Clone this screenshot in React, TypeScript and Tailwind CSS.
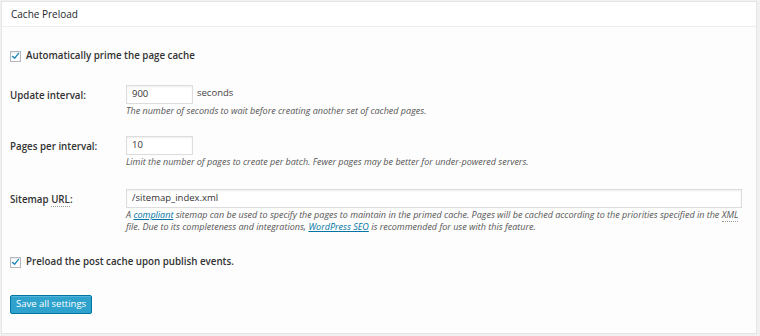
import React from 'react';

function Check() {
  return (
    <span className="w-[11px] h-[11px] border border-[#b4b9be] bg-white shadow-[inset_0_1px_2px_rgba(0,0,0,0.1)] flex items-center justify-center shrink-0">
      <svg viewBox="0 0 12 12" className="w-[10px] h-[10px]">
        <path d="M2 6.5 L4.8 9 L10 2.5" fill="none" stroke="#1e8cbe" strokeWidth="1.8" strokeLinecap="round" strokeLinejoin="round" />
      </svg>
    </span>
  );
}

export default function App() {
  return (
    <div className="w-[760px] h-[336px] bg-[#f1f1f1] pt-[1px] pl-[1px] pr-[3px] pb-[2px] font-['Open_Sans',sans-serif] text-[#444]">
      <div className="h-full bg-[#fdfdfd] border border-[#e5e5e5] flex flex-col">
        {/* Header */}
        <div className="h-[25px] bg-white border-b border-[#eeeeee] flex items-center px-[9px]">
          <span className="text-[10px] text-[#23282d]">Cache Preload</span>
        </div>

        <div className="px-[8px] pt-[22px] flex flex-col">
          <label className="flex items-center gap-[5px] h-[14px]">
            <Check />
            <span className="text-[9.75px] font-semibold text-[#333]">Automatically prime the page cache</span>
          </label>

          {/* Update interval */}
          <div className="flex mt-[22px]">
            <div className="w-[116px] pt-[4px] text-[9.75px] font-semibold text-[#333]">Update interval:</div>
            <div className="flex flex-col">
              <div className="flex items-start gap-[4px]">
                <div className="w-[67px] h-[19px] bg-white border border-[#ddd] shadow-[inset_0_1px_2px_rgba(0,0,0,0.07)] px-[5px] flex items-center text-[9.5px] text-[#333]">900</div>
                <span className="text-[9.5px] text-[#444] leading-[16px]">seconds</span>
              </div>
              <div className="mt-[1px] text-[9px] italic text-[#555] leading-[12px]">The number of seconds to wait before creating another set of cached pages.</div>
            </div>
          </div>

          {/* Pages per interval */}
          <div className="flex mt-[19px]">
            <div className="w-[116px] pt-[4px] text-[9.75px] font-semibold text-[#333]">Pages per interval:</div>
            <div className="flex flex-col">
              <div className="w-[67px] h-[19px] bg-white border border-[#ddd] shadow-[inset_0_1px_2px_rgba(0,0,0,0.07)] px-[5px] flex items-center text-[9.5px] text-[#333]">10</div>
              <div className="mt-[1px] text-[9px] italic text-[#555] leading-[12px]">Limit the number of pages to create per batch. Fewer pages may be better for under-powered servers.</div>
            </div>
          </div>

          {/* Sitemap URL */}
          <div className="flex mt-[21px]">
            <div className="w-[116px] pt-[4px] text-[9.75px] font-semibold text-[#333]">
              Sitemap <abbr className="no-underline border-b border-dotted border-[#999]">URL</abbr>:
            </div>
            <div className="flex flex-col flex-1 pr-[6px]">
              <div className="h-[19px] bg-white border border-[#ddd] shadow-[inset_0_1px_2px_rgba(0,0,0,0.07)] px-[5px] flex items-center text-[9.5px] text-[#333]">/sitemap_index.xml</div>
              <div className="mt-[1px] text-[9px] italic text-[#555] leading-[12px]">
                A <a className="text-[#0074a2] underline">compliant</a> sitemap can be used to specify the pages to maintain in the primed cache. Pages will be cached according to the priorities specified in the <abbr className="no-underline border-b border-dotted border-[#999]">XML</abbr> file. Due to its completeness and integrations, <a className="text-[#0074a2] underline">WordPress SEO</a> is recommended for use with this feature.
              </div>
            </div>
          </div>

          <label className="flex items-center gap-[5px] h-[14px] mt-[22px]">
            <Check />
            <span className="text-[9.75px] font-semibold text-[#333]">Preload the post cache upon publish events.</span>
          </label>

          <div className="mt-[20px]">
            <button className="h-[19px] px-[5px] bg-[#2ea2cc] border border-[#0074a2] rounded-[2px] text-white text-[9.5px] shadow-[inset_0_1px_0_rgba(120,200,230,0.5)]">Save all settings</button>
          </div>
        </div>
      </div>
    </div>
  );
}
